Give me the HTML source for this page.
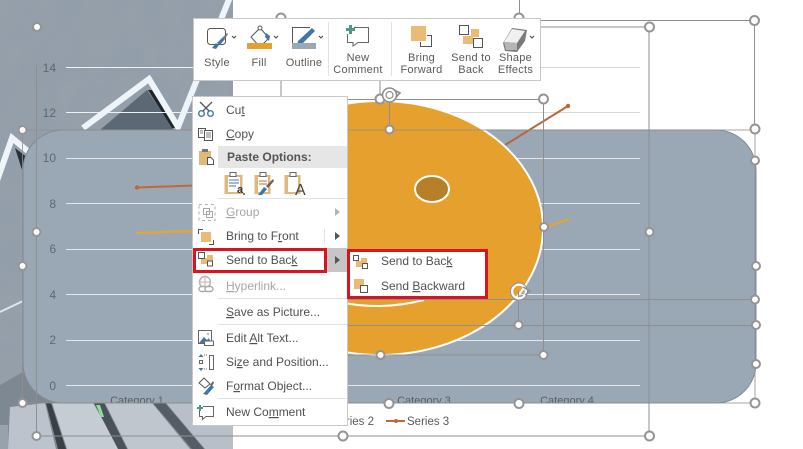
<!DOCTYPE html>
<html><head><meta charset="utf-8">
<style>
html,body{margin:0;padding:0;background:#fff;width:803px;height:449px;overflow:hidden}
svg{display:block;font-family:"Liberation Sans",sans-serif}
.m{font-size:12px;fill:#505050}
.d{font-size:12px;fill:#a6a6a6}
.t{font-size:11px;fill:#5a5a5a;text-anchor:middle;letter-spacing:.25px}
.a{font-size:12px;fill:#5f6872;text-anchor:end}
.c{font-size:11px;fill:#56606a;text-anchor:middle}
.u{text-decoration:underline}
.h{fill:#fff;stroke:#949494;stroke-width:2}
.l{stroke:#8f8f8f;stroke-width:1;fill:none}
</style></head><body>
<svg width="803" height="449" viewBox="0 0 803 449" xmlns="http://www.w3.org/2000/svg">
<defs>
<filter id="n" x="0" y="0" width="100%" height="100%">
<feTurbulence type="fractalNoise" baseFrequency=".035" numOctaves="4" seed="4"/>
<feColorMatrix values="0 0 0 0 .35  0 0 0 0 .38  0 0 0 0 .42  .9 .9 0 0 -.6"/>
</filter>
<clipPath id="img"><rect width="233" height="449"/></clipPath>
<clipPath id="rr"><rect x="23" y="130" width="733" height="273" rx="40"/></clipPath>
</defs>

<!-- photo background -->
<g clip-path="url(#img)">
<rect width="233" height="449" fill="#929eaa"/>
<rect width="233" height="449" filter="url(#n)" opacity=".4"/>
<polygon points="100,130 147,90 174,130" fill="#5c6873"/>
<polygon points="148,90 152,90 176,128 172,128" fill="#1f252b"/>
<polygon points="15,148 28,158 22,170" fill="#2a3037"/>
<polyline points="-8,195 12,138 30,153" fill="none" stroke="#eef4f7" stroke-width="6"/>
<polyline points="83,128 149,79 178,127 232,-8" fill="none" stroke="#eef4f7" stroke-width="6"/>
<polyline points="0,312 23,301" stroke="#dfe4e8" stroke-width="2"/>
<!-- steps -->
<polygon points="0,385 23,372 60,403 233,403 233,449 0,449" fill="#7d8892"/>
<polygon points="0,425 8,425 8,449 0,449" fill="#98a2ac"/>
<polygon points="10,407 45,403 56,449 8,449" fill="#bcc3cc"/>
<polygon points="52,403 93,403 120,449 67,449" fill="#c6ccd4"/>
<polygon points="105,403 152,403 190,449 128,449" fill="#bfc6ce"/>
<polygon points="166,403 233,403 233,449 205,449" fill="#b8bfc9"/>
<polygon points="46,403 51,403 66,449 58,449" fill="#3a4046"/>
<polygon points="94,403 104,403 127,449 118,449" fill="#4a5159"/>
<polygon points="153,403 165,403 204,449 192,449" fill="#555c66"/>
<polygon points="96,405 100,405 104,417 101,417" fill="#8ce098"/>
</g>

<!-- gridlines over white/photo -->
<g stroke-width="1">
<line x1="66" y1="67.500" x2="233" y2="67.500" stroke="#eef2f5"/>
<line x1="233" y1="67.500" x2="640" y2="67.500" stroke="#d9d9d9"/>
<line x1="66" y1="112.500" x2="233" y2="112.500" stroke="#eef2f5"/>
<line x1="233" y1="112.500" x2="640" y2="112.500" stroke="#d9d9d9"/>
</g>
<text class="a" x="56" y="72">14</text>
<text class="a" x="56" y="117">12</text>

<!-- legend -->
<text x="374" y="425" text-anchor="end" font-size="11.500" fill="#595959">Series 2</text>
<line x1="386" y1="421" x2="405" y2="421" stroke="#c0683a" stroke-width="2"/>
<circle cx="396" cy="421" r="2" fill="#c0683a"/>
<text x="407" y="425" font-size="11.500" fill="#595959">Series 3</text>

<!-- rounded rectangle -->
<rect x="23" y="130" width="733" height="273" rx="40" fill="#9aa7b5" stroke="#7f8a95" stroke-width="1"/>
<g stroke="#e4e8ec" stroke-width="1">
<line x1="66" y1="158.500" x2="640" y2="158.500"/>
<line x1="66" y1="203.500" x2="640" y2="203.500"/>
<line x1="66" y1="249.500" x2="640" y2="249.500"/>
<line x1="66" y1="294.500" x2="640" y2="294.500"/>
<line x1="66" y1="340.500" x2="640" y2="340.500"/>
<line x1="66" y1="385.500" x2="640" y2="385.500"/>
</g>
<text class="a" x="56" y="162">10</text>
<text class="a" x="56" y="208">8</text>
<text class="a" x="56" y="253">6</text>
<text class="a" x="56" y="299">4</text>
<text class="a" x="56" y="344">2</text>
<text class="a" x="56" y="390">0</text>
<g clip-path="url(#rr)">
<text class="c" x="137" y="404">Category 1</text>
<text class="c" x="424" y="404">Category 3</text>
<text class="c" x="567" y="404">Category 4</text>
</g>

<!-- data lines -->
<line x1="137" y1="187.500" x2="195" y2="185.500" stroke="#c0683a" stroke-width="2"/>
<circle cx="137" cy="187.500" r="2.200" fill="#c0683a"/>
<line x1="505" y1="145" x2="568" y2="106" stroke="#b9663a" stroke-width="2"/>
<circle cx="568" cy="106" r="2.200" fill="#b9663a"/>
<line x1="136" y1="233" x2="195" y2="231" stroke="#dfa53f" stroke-width="2.500"/>
<line x1="546" y1="227" x2="569" y2="219" stroke="#dfa53f" stroke-width="2.500"/>

<!-- orange ellipse -->
<ellipse cx="380" cy="228" rx="163" ry="127" fill="#e6a02e" stroke="#fff" stroke-width="2"/>
<path d="M340 302 Q380 311 424 300" fill="none" stroke="#fff" stroke-width="2"/>
<ellipse cx="432" cy="189" rx="17" ry="13" fill="#b77f28" stroke="#fff" stroke-width="2"/>

<!-- selection lines -->
<g class="l">
<path d="M36.500 65V436H649V27H540"/>
<path d="M22.500 130H755V403H22.500V130" stroke-opacity=".8"/>
<path d="M540 20.500H754.500V130"/>
<path d="M348 99.500H543.500V355H348"/>
<path d="M389.500 95V130"/>
<path d="M340 299.500H755"/>
<path d="M340 325.500H755"/>
<path d="M518.500 291V325"/>
<path d="M519.500 0V18"/>
<path d="M281 18V96"/>
<path d="M380 80V99"/>
</g>

<!-- handles -->
<g class="h">
<circle cx="37" cy="27" r="4"/><circle cx="36.500" cy="232" r="4"/><circle cx="36.500" cy="436" r="4"/>
<circle cx="22.500" cy="130" r="4"/><circle cx="22.500" cy="266" r="4"/><circle cx="22.500" cy="403" r="4"/>
<circle cx="649.500" cy="27" r="4.500"/><circle cx="649.500" cy="232" r="4"/><circle cx="649.500" cy="436" r="4.500"/>
<circle cx="754.500" cy="20.500" r="4.500"/><circle cx="755" cy="129" r="4.500"/>
<circle cx="755" cy="160.500" r="4"/><circle cx="756" cy="266" r="4"/><circle cx="755" cy="299.500" r="4"/><circle cx="756" cy="325" r="4"/><circle cx="756" cy="364" r="4"/><circle cx="755" cy="403" r="4.500"/>
<circle cx="281" cy="18" r="4.500"/><circle cx="519" cy="18" r="4.500"/>
<circle cx="543.500" cy="99" r="4.500"/><circle cx="380" cy="99" r="4.500"/><circle cx="389.500" cy="129.500" r="4"/>
<circle cx="544" cy="227" r="4"/><circle cx="380.500" cy="355" r="4"/><circle cx="543.500" cy="355" r="4"/>
<circle cx="518.500" cy="325" r="4"/><circle cx="343" cy="436" r="4.500"/><circle cx="519" cy="403.500" r="4.500"/><circle cx="389" cy="403.500" r="4.500"/>
</g>

<!-- rotation handles -->
<g fill="none" stroke="#8f8f8f" stroke-width="1.600">
<circle cx="389.500" cy="95" r="7" fill="#fff"/>
<path d="M394 90 L400 93 L396 97"/>
<circle cx="389.500" cy="95" r="3.500" stroke-width="1.200"/>
<circle cx="519" cy="291.500" r="7" stroke="#fff" stroke-width="2.500"/>
<circle cx="519" cy="291.500" r="8.500" stroke="#8f8f8f" stroke-width="1"/>
<path d="M523 287 L530 291 L525 295" stroke-width="1.400"/>
</g>

<!-- mini toolbar -->
<rect x="193.500" y="18.500" width="347" height="62" fill="#fff" stroke="#c8c8c8"/>
<line x1="328.500" y1="22" x2="328.500" y2="76" stroke="#e2e2e2"/>
<line x1="391.500" y1="22" x2="391.500" y2="76" stroke="#e2e2e2"/>
<g fill="none" stroke="#444" stroke-width="1">
<path d="M232 36l2 2 2-2"/><path d="M274 36l2 2 2-2"/><path d="M319 36l2 2 2-2"/><path d="M530 36l2 2 2-2"/>
</g>
<!-- Style -->
<rect x="207.500" y="28.500" width="18" height="16" rx="3" fill="#fff" stroke="#555"/>
<path d="M212 48l4-5 3 2-3 4z" fill="#3f77ad"/>
<path d="M217 43l6-6 2 2-5 6z" fill="#3f77ad"/>
<path d="M223 37l4-4 1 1-3 5z" fill="#777"/>
<!-- Fill -->
<path d="M260 28l9 10-9 9-9-10z" fill="#fff" stroke="#555"/>
<circle cx="260" cy="28" r="2" fill="#fff" stroke="#555"/>
<path d="M265 37l1-4 4 3-1 5z" fill="#3f77ad"/>
<rect x="247" y="43" width="25" height="6" fill="#e6a02e"/>
<!-- Outline -->
<path d="M310 27.500H292.500V43" fill="none" stroke="#555"/>
<path d="M298 41l14-13 3 3-13 13-5 1z" fill="#3f77ad"/>
<rect x="292" y="43" width="24" height="6" fill="#9aa7b5"/>
<!-- New comment -->
<path d="M354 27.500H368.500V42.500H358L353 46V42.500H347.500V34" fill="#fff" stroke="#666"/>
<path d="M349 25h3v3h3v3h-3v3h-3v-3h-3v-3h3z" fill="#4c9a8a"/>
<!-- Bring forward -->
<rect x="411" y="26" width="15" height="15" fill="#e9bb77"/>
<path d="M427 35.500H431.500V46.500H420.500V42" fill="none" stroke="#555"/>
<!-- Send to back -->
<rect x="471" y="29" width="8" height="8" fill="#e9bb77"/>
<rect x="463" y="36" width="10" height="8" fill="#e9bb77"/>
<rect x="459.500" y="25.500" width="9" height="9" fill="#fff" stroke="#555"/>
<rect x="473.500" y="38.500" width="9" height="9" fill="#fff" stroke="#555"/>
<!-- Shape effects -->
<path d="M503 43L512 28L527 30L525 41L517 52L505 51Z" fill="#7a7a7a"/>
<path d="M504 42L512 29L525 31L517 43Z" fill="#f0f0f0"/>
<path d="M504 42L517 43V50L506 50Z" fill="#b5b5b5"/>
<g class="t">
<text x="217" y="66">Style</text>
<text x="259" y="66">Fill</text>
<text x="304" y="66">Outline</text>
<text x="358" y="61">New</text>
<text x="358" y="73">Comment</text>
<text x="421.500" y="61">Bring</text>
<text x="421.500" y="73">Forward</text>
<text x="471" y="61">Send to</text>
<text x="471" y="73">Back</text>
<text x="515.500" y="61">Shape</text>
<text x="515.500" y="73">Effects</text>
</g>

<!-- context menu -->
<rect x="192.500" y="96.500" width="155" height="329" fill="#fff" stroke="#c8c8c8"/>
<rect x="218" y="146" width="129" height="22" fill="#e6e6e6"/>
<g stroke="#e2e2e2">
<line x1="218" y1="198.500" x2="347" y2="198.500"/>
<line x1="218" y1="298.500" x2="347" y2="298.500"/>
<line x1="218" y1="324.500" x2="347" y2="324.500"/>
<line x1="218" y1="398.500" x2="347" y2="398.500"/>
<line x1="324.500" y1="229" x2="324.500" y2="243"/>
</g>
<rect x="326" y="248" width="22" height="24" fill="#c6c6c6"/>
<path d="M335 208l5 4-5 4z" fill="#b5b5b5"/>
<path d="M335 232l5 4-5 4z" fill="#555"/>
<path d="M335 256l5 4-5 4z" fill="#555"/>

<text class="m" x="226" y="114">Cu<tspan class="u">t</tspan></text>
<text class="m" x="226" y="138"><tspan class="u">C</tspan>opy</text>
<text x="227" y="161" font-size="12" font-weight="bold" fill="#555">Paste Options:</text>
<text class="d" x="226" y="216"><tspan class="u">G</tspan>roup</text>
<text class="m" x="226" y="240">Bring to F<tspan class="u">r</tspan>ont</text>
<text class="m" x="226" y="264">Send to Bac<tspan class="u">k</tspan></text>
<text class="d" x="226" y="290"><tspan class="u">H</tspan>yperlink...</text>
<text class="m" x="226" y="316"><tspan class="u">S</tspan>ave as Picture...</text>
<text class="m" x="226" y="342">Edit <tspan class="u">A</tspan>lt Text...</text>
<text class="m" x="226" y="366">Si<tspan class="u">z</tspan>e and Position...</text>
<text class="m" x="226" y="390">F<tspan class="u">o</tspan>rmat Object...</text>
<text class="m" x="226" y="416">New Co<tspan class="u">m</tspan>ment</text>

<!-- menu icons -->
<g fill="none" stroke="#555" stroke-width="1.300">
<path d="M200 102L212 114M212 102L200 114"/>
</g>
<circle cx="201.500" cy="113.500" r="2.800" fill="#fff" stroke="#3f77ad" stroke-width="1.400"/>
<circle cx="210.500" cy="113.500" r="2.800" fill="#fff" stroke="#3f77ad" stroke-width="1.400"/>
<g fill="#fff" stroke="#555">
<rect x="198.500" y="128.500" width="7" height="9"/>
<rect x="204.500" y="130.500" width="8" height="10"/>
</g>
<path d="M206 133h5M206 135h5M206 137h5M200 131h3M200 133h3" stroke="#555" stroke-width=".8"/>
<!-- paste -->
<rect x="199" y="151" width="12" height="14" fill="#e0b87a"/>
<rect x="202" y="149" width="6" height="3" fill="#777"/>
<path d="M207.500 157.500H211L213.500 160V164.500H207.500Z" fill="#fff" stroke="#555"/>
<!-- paste options -->
<g>
<rect x="224.500" y="175" width="18" height="19" fill="#e0b87a"/><rect x="228" y="177" width="12" height="15" fill="#fff"/><rect x="230" y="172.500" width="6" height="4" fill="#fff" stroke="#666"/>
<path d="M229 180h10M229 183h10M229 186h7" stroke="#3f77ad"/>
<text x="237" y="193" font-size="11" font-weight="bold" fill="#333">a</text>
<rect x="243" y="193" width="2" height="2" fill="#c0683a"/>
<rect x="254.500" y="175" width="16" height="19" fill="#e0b87a"/><rect x="258" y="177" width="10" height="15" fill="#fff"/><rect x="260" y="172.500" width="6" height="4" fill="#fff" stroke="#666"/>
<path d="M259 181h8M259 184h8" stroke="#c0683a"/>
<path d="M258 195l6-8 3 2-5 6z" fill="#3f77ad"/><path d="M266 186l7-7 1 2-6 7z" fill="#666"/>
<rect x="284.500" y="175" width="16" height="19" fill="#e0b87a"/><rect x="288" y="177" width="10" height="15" fill="#fff"/><rect x="290" y="172.500" width="6" height="4" fill="#fff" stroke="#666"/>
<text x="295" y="195" font-size="16" fill="#444">A</text>
</g>
<!-- group -->
<path d="M199 204.500h16v16h-16z" fill="none" stroke="#b0b0b0" stroke-dasharray="3 3"/>
<rect x="203.500" y="208.500" width="6" height="6" fill="none" stroke="#a8a8a8"/>
<rect x="206.500" y="211.500" width="6" height="6" fill="none" stroke="#a8a8a8"/>
<!-- bring to front -->
<rect x="201" y="232" width="10" height="10" fill="#e9bb77"/>
<path d="M203 229.500H198.500V234" fill="none" stroke="#555"/>
<path d="M209 244.500H213.500V240" fill="none" stroke="#555"/>
<!-- send to back -->
<rect x="207" y="255" width="6" height="6" fill="#e9bb77"/><rect x="201" y="258" width="7" height="6" fill="#e9bb77"/>
<rect x="198.500" y="252.500" width="6" height="6" fill="#fff" stroke="#555"/>
<rect x="207.500" y="261" width="5" height="5" fill="#fff" stroke="#555"/>
<!-- hyperlink -->
<circle cx="205" cy="282" r="5.500" fill="none" stroke="#b5b5b5" stroke-width="1.500"/>
<path d="M199.500 282h11M205 276.500v11" stroke="#b5b5b5"/>
<rect x="199" y="286.500" width="8" height="5" rx="2.500" fill="#fff" stroke="#aaa" stroke-width="1.400"/>
<rect x="205" y="286.500" width="8" height="5" rx="2.500" fill="#fff" stroke="#aaa" stroke-width="1.400"/>
<!-- edit alt -->
<rect x="198.500" y="330.500" width="13" height="13" fill="#fff" stroke="#666"/>
<path d="M199 343l5-6 3 3 2-2 2 5z" fill="#3f77ad"/><circle cx="208" cy="334" r="1.200" fill="#e0b87a"/>
<rect x="204.500" y="341" width="9" height="4.500" fill="#fff" stroke="#666"/>
<!-- size -->
<rect x="209.500" y="355.500" width="4" height="14" fill="#fff" stroke="#666"/>
<path d="M201 354l2.500 3h-5zM201 371l2.500-3h-5z" fill="#3f77ad"/>
<rect x="199.500" y="360.500" width="3" height="3" fill="none" stroke="#666"/>
<path d="M204 355h3M204 369h3" stroke="#666" stroke-dasharray="1 1"/>
<!-- format object -->
<path d="M199 383l5-5 6 6-5 4z" fill="#fff" stroke="#555"/>
<path d="M203 394l8-9 3 2-7 8z" fill="#3f77ad"/><path d="M210 385l3-4 1 2-2 3z" fill="#666"/>
<!-- new comment -->
<path d="M203 406.500H213.500V416.500H206L202.500 419.500V416.500H199.500V411" fill="#fff" stroke="#666"/>
<path d="M199 405h2v2h2v2h-2v2h-2v-2h-2v-2h2z" fill="#4c9a8a"/>

<!-- submenu -->
<rect x="349" y="250" width="138" height="47" fill="#fff"/>
<text class="m" x="381" y="265">Send to Bac<tspan class="u">k</tspan></text>
<text class="m" x="381" y="290">Send <tspan class="u">B</tspan>ackward</text>
<rect x="361" y="258" width="6" height="6" fill="#e9bb77"/><rect x="356" y="261" width="7" height="6" fill="#e9bb77"/>
<rect x="353.500" y="255.500" width="5" height="5" fill="#fff" stroke="#555"/>
<rect x="362.500" y="263.500" width="5" height="5" fill="#fff" stroke="#555"/>
<rect x="354" y="279" width="10" height="10" fill="#e9bb77"/>
<rect x="360.500" y="285.500" width="7" height="7" fill="#fff" stroke="#555"/>

<!-- red callouts -->
<rect x="194.500" y="249.500" width="131" height="22" fill="none" stroke="#d8141f" stroke-width="3"/>
<rect x="348.500" y="250.500" width="138" height="47" fill="none" stroke="#d8141f" stroke-width="3"/>
</svg>
</body></html>
